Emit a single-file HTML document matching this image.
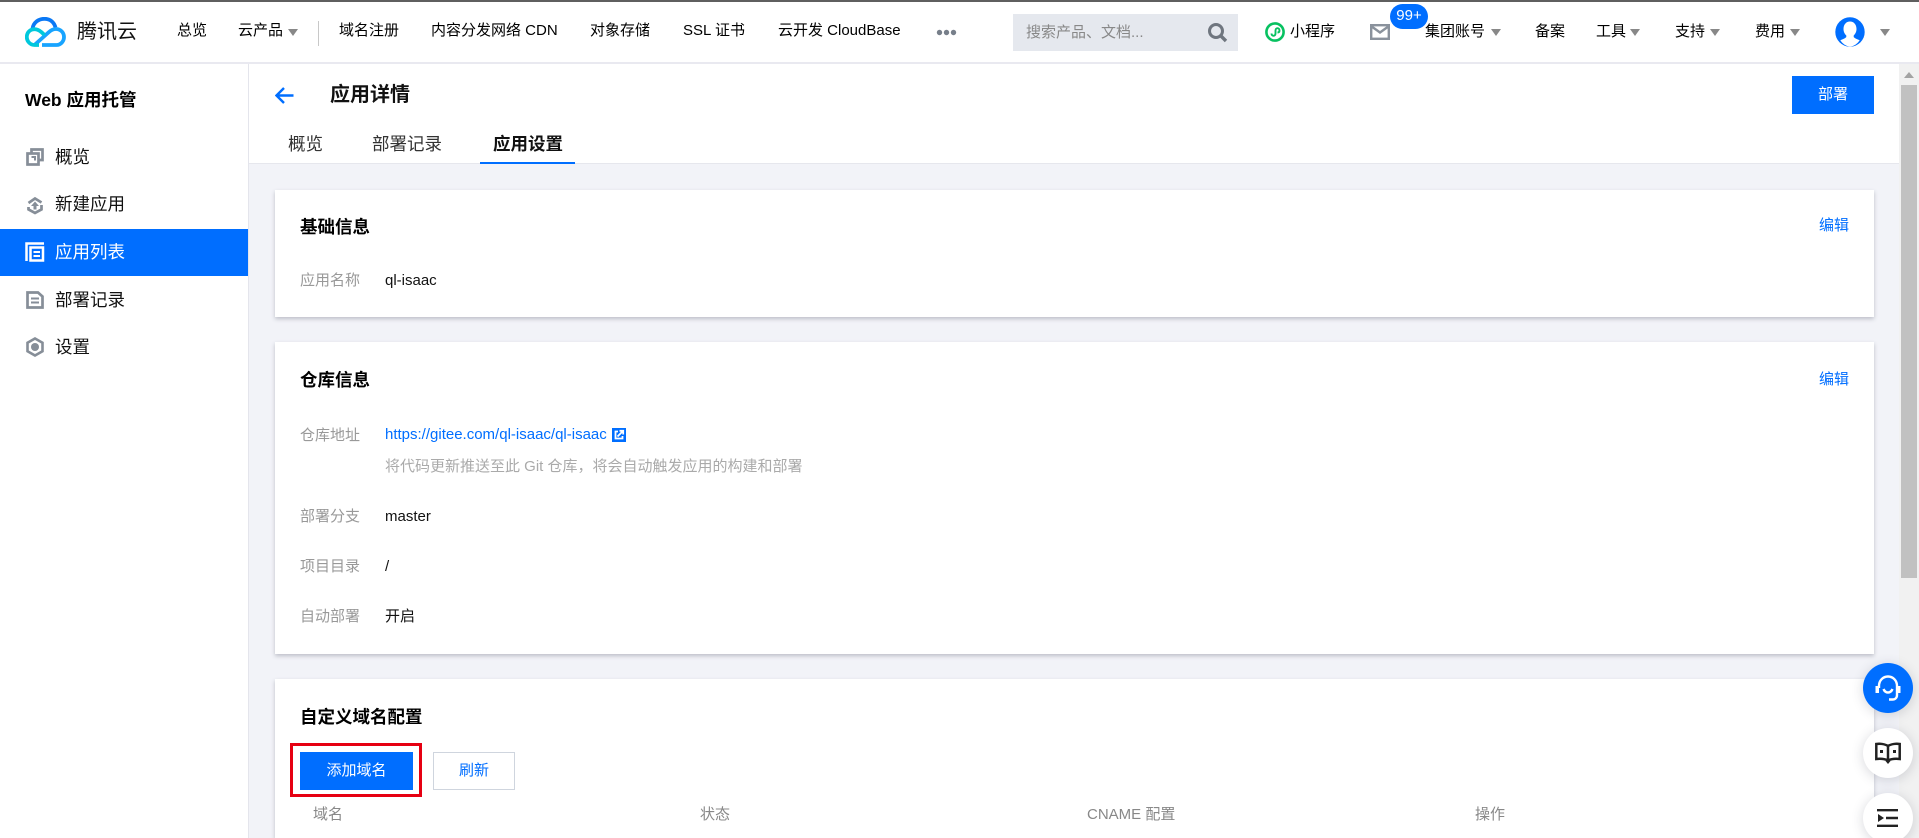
<!DOCTYPE html>
<html lang="zh"><head><meta charset="utf-8"><title>应用详情</title>
<style>
html,body{margin:0;padding:0;width:1919px;height:838px;overflow:hidden;background:#f2f3f8}
body{position:relative;font-family:"Liberation Sans","Noto Sans CJK SC",sans-serif;font-size:15px;color:#000}
.a{position:absolute;white-space:nowrap;line-height:20px}
.box{position:absolute}
.c{position:absolute;width:0;height:0;border-left:5px solid transparent;border-right:5px solid transparent;border-top:7px solid #888;top:29px}
.side{font-size:17.5px;left:55px;color:#111}
.lbl{left:300px;color:#999}
.val{left:385px;color:#111}
.card{position:absolute;left:275px;width:1599px;background:#fff;box-shadow:0 2px 4px rgba(54,58,80,.28)}
.title{left:300px;font-size:17.5px;font-weight:bold;color:#000}
.blue{color:#006eff}
.th{color:#888;top:805px}
.fab{position:absolute;left:1863px;width:50px;height:50px;border-radius:25px;background:#fff;box-shadow:0 2px 12px rgba(54,58,80,.2)}
svg{position:absolute;display:block}
</style></head><body>
<!-- top strip + header -->
<div class="box" style="left:0;top:0;width:1919px;height:62px;background:#fff"></div>
<div class="box" style="left:0;top:0;width:1919px;height:2px;background:#5f5f5f"></div>
<div class="box" style="left:0;top:62px;width:1919px;height:2px;background:#e9e9f0"></div>
<svg style="left:25px;top:17px" width="41" height="30" viewBox="0 0 41 30" fill="none">
<path d="M7.500 11.500C8.500 5.500 13.500 1.800 19.500 1.800C25 1.800 29 5 30.500 10.500" stroke="#0a78f5" stroke-width="3.800"/>
<path d="M17 28H31.500C36 28 39 24 39 20C39 15.500 35.500 12 31 12C28 12 26 13.200 24 15L10 27.500" stroke="#18a4ff" stroke-width="3.800" stroke-linejoin="round"/>
<path d="M14 28H9.500C5 28 1.800 24 1.800 20C1.800 15.500 5 12.200 9.500 12.200C12.500 12.200 14.500 13.500 16.500 15.200L19.500 18" stroke="#00c8dc" stroke-width="3.800"/>
</svg>
<div class="a" style="left:77px;top:22px;font-size:20px;color:#111">腾讯云</div>
<div class="a" style="left:177px;top:21px">总览</div>
<div class="a" style="left:238px;top:21px">云产品</div><div class="c" style="left:288px"></div>
<div class="box" style="left:318px;top:21px;width:1px;height:25px;background:#c8c8c8"></div>
<div class="a" style="left:339px;top:21px">域名注册</div>
<div class="a" style="left:431px;top:21px">内容分发网络 CDN</div>
<div class="a" style="left:590px;top:21px">对象存储</div>
<div class="a" style="left:683px;top:21px">SSL 证书</div>
<div class="a" style="left:778px;top:21px">云开发 CloudBase</div>
<svg style="left:936px;top:29px" width="21" height="7"><circle cx="3.500" cy="3.500" r="2.700" fill="#777f8a"/><circle cx="10.500" cy="3.500" r="2.700" fill="#777f8a"/><circle cx="17.500" cy="3.500" r="2.700" fill="#777f8a"/></svg>
<div class="box" style="left:1013px;top:14px;width:225px;height:37px;background:#e5e8ee"></div>
<div class="a" style="left:1026px;top:23px;color:#888">搜索产品、文档...</div>
<svg style="left:1207px;top:22px" width="21" height="21" viewBox="0 0 21 21" fill="none"><circle cx="9" cy="9" r="6.500" stroke="#6f767f" stroke-width="3"/><path d="M14 14l5 5" stroke="#6f767f" stroke-width="3.400"/></svg>
<svg style="left:1265px;top:22px" width="20" height="20" viewBox="0 0 20 20" fill="none"><circle cx="10" cy="10" r="8.600" stroke="#07c160" stroke-width="2.600"/><path d="M6.500 11.500c0 1.500 1 2.300 2 2.300s2-.8 2-2.300V8.500c0-1.500 1-2.300 2-2.300s2 .8 2 2.300-1 2-2 2" stroke="#07c160" stroke-width="1.900"/></svg>
<div class="a" style="left:1290px;top:22px">小程序</div>
<svg style="left:1370px;top:24px" width="20" height="16" viewBox="0 0 20 16" fill="none"><rect x="1.200" y="1.200" width="17.600" height="13.600" stroke="#8a929c" stroke-width="2.400"/><path d="M1 2l9 6.500L19 2" stroke="#8a929c" stroke-width="2.400"/></svg>
<div class="box" style="left:1390px;top:4px;width:38px;height:25px;border-radius:12.500px;background:#006eff"></div>
<div class="a" style="left:1390px;top:6px;width:38px;text-align:center;color:#fff;font-size:15px">99+</div>
<div class="a" style="left:1425px;top:22px">集团账号</div><div class="c" style="left:1491px"></div>
<div class="a" style="left:1535px;top:22px">备案</div>
<div class="a" style="left:1596px;top:22px">工具</div><div class="c" style="left:1630px"></div>
<div class="a" style="left:1675px;top:22px">支持</div><div class="c" style="left:1710px"></div>
<div class="a" style="left:1755px;top:22px">费用</div><div class="c" style="left:1790px"></div>
<svg style="left:1835px;top:17px" width="30" height="30" viewBox="0 0 30 30"><circle cx="15" cy="15" r="14.700" fill="#006eff"/><path d="M15 4.500c3.800 0 6.500 3 6.500 7.500 0 2.800-1.200 5-2.800 6.500v1.500c1 1.300 3.500 2.200 6 3.200A14 14 0 0 1 15 29.700a14 14 0 0 1-9.700-6.500c2.500-1 5-1.900 6-3.200v-1.500c-1.600-1.500-2.800-3.700-2.800-6.500 0-4.500 2.700-7.500 6.500-7.500z" fill="#fff"/></svg>
<div class="c" style="left:1880px"></div>

<!-- sidebar -->
<div class="box" style="left:0;top:64px;width:248px;height:774px;background:#fff;border-right:1px solid #e4e5ec"></div>
<div class="a" style="left:25px;top:90px;font-size:17.500px;font-weight:bold;color:#000">Web 应用托管</div>
<div class="box" style="left:0;top:229px;width:248px;height:47px;background:#006eff"></div>
<svg style="left:26px;top:148px" width="18" height="18" viewBox="0 0 18 18" fill="none" stroke="#868e98" stroke-width="2.700"><path d="M5.500 5V1.500h11V12H13"/><rect x="1.500" y="5.500" width="11" height="11"/><path d="M5.500 9h3.500v3.500" stroke-width="2"/></svg>
<div class="a side" style="top:147px">概览</div>
<svg style="left:26px;top:196px" width="18" height="19" viewBox="0 0 18 19" fill="none"><path d="M2.500 7L9 2.500 15.500 6.500M15.500 9v4.500L9 17l-6.500-3.500V11" stroke="#868e98" stroke-width="2.700"/><path d="M9 5.500l4 4.500h-2.500v3.500h-3V10H5z" fill="#868e98"/></svg>
<div class="a side" style="top:194px">新建应用</div>
<svg style="left:25px;top:242px" width="20" height="20" viewBox="0 0 20 20" fill="none" stroke="#fff" stroke-width="2.500"><path d="M19 1.500H1.500V19"/><rect x="5.500" y="5.500" width="12.500" height="13"/><path d="M8.500 10h6.500M8.500 14h6.500" stroke-width="2"/></svg>
<div class="a side" style="top:242px;color:#fff">应用列表</div>
<svg style="left:26px;top:291px" width="18" height="18" viewBox="0 0 18 18" fill="none" stroke="#868e98" stroke-width="2.700"><path d="M1.500 1.500h10.500l4.500 4v11h-15z"/><path d="M5 7.500h8M5 11.500h8" stroke-width="2"/></svg>
<div class="a side" style="top:290px">部署记录</div>
<svg style="left:26px;top:337px" width="18" height="20" viewBox="0 0 18 20"><path d="M9 1.500l7.500 4.300v8.400L9 18.500l-7.500-4.300V5.800z" fill="none" stroke="#868e98" stroke-width="2.600"/><circle cx="9" cy="10" r="4" fill="#868e98"/></svg>
<div class="a side" style="top:337px">设置</div>

<!-- content header -->
<div class="box" style="left:249px;top:64px;width:1650px;height:99px;background:#fff;border-bottom:1px solid #e6e7ed"></div>
<svg style="left:275px;top:86px" width="19" height="19" viewBox="0 0 19 19" fill="none" stroke="#006eff" stroke-width="2.400"><path d="M1.500 9.500h17M9 2L1.500 9.500 9 17"/></svg>
<div class="a" style="left:330px;top:85px;font-size:20px;font-weight:bold;color:#111">应用详情</div>
<div class="box" style="left:1792px;top:76px;width:82px;height:38px;background:#006eff"></div>
<div class="a" style="left:1792px;top:85px;width:82px;text-align:center;color:#fff">部署</div>
<div class="a" style="left:288px;top:134px;font-size:17.500px;color:#333">概览</div>
<div class="a" style="left:372px;top:134px;font-size:17.500px;color:#333">部署记录</div>
<div class="a" style="left:493px;top:134px;font-size:17.500px;font-weight:bold;color:#111">应用设置</div>
<div class="box" style="left:480px;top:162px;width:95px;height:2px;background:#006eff"></div>

<!-- card 1 -->
<div class="card" style="top:190px;height:127px"></div>
<div class="a title" style="top:217px">基础信息</div>
<div class="a blue" style="left:1819px;top:216px">编辑</div>
<div class="a lbl" style="top:271px">应用名称</div>
<div class="a val" style="top:271px">ql-isaac</div>

<!-- card 2 -->
<div class="card" style="top:342px;height:312px"></div>
<div class="a title" style="top:370px">仓库信息</div>
<div class="a blue" style="left:1819px;top:370px">编辑</div>
<div class="a lbl" style="top:426px">仓库地址</div>
<div class="a val blue" style="top:425px;color:#006eff">https://gitee.com/ql-isaac/ql-isaac</div>
<svg style="left:612px;top:428px" width="14" height="14" viewBox="0 0 14 14"><rect width="14" height="14" fill="#006eff"/><path d="M6 3.500H3.500v7h7V8" stroke="#fff" stroke-width="1.800" fill="none"/><path d="M5.500 8.500l5-5M7.500 2.800h3.700v3.700" stroke="#fff" stroke-width="1.800" fill="none"/></svg>
<div class="a" style="left:385px;top:457px;color:#aaa">将代码更新推送至此 Git 仓库，将会自动触发应用的构建和部署</div>
<div class="a lbl" style="top:507px">部署分支</div>
<div class="a val" style="top:507px">master</div>
<div class="a lbl" style="top:557px">项目目录</div>
<div class="a val" style="top:557px">/</div>
<div class="a lbl" style="top:607px">自动部署</div>
<div class="a val" style="top:607px">开启</div>

<!-- card 3 -->
<div class="card" style="top:679px;height:159px"></div>
<div class="a title" style="left:300px;top:707px">自定义域名配置</div>
<div class="box" style="left:290px;top:743px;width:126px;height:48px;border:3px solid #e60012"></div>
<div class="box" style="left:300px;top:752px;width:113px;height:38px;background:#006eff"></div>
<div class="a" style="left:300px;top:761px;width:113px;text-align:center;color:#fff">添加域名</div>
<div class="box" style="left:433px;top:752px;width:80px;height:36px;border:1px solid #cfd5de;background:#fff"></div>
<div class="a blue" style="left:433px;top:761px;width:82px;text-align:center">刷新</div>
<div class="a th" style="left:313px">域名</div>
<div class="a th" style="left:700px">状态</div>
<div class="a th" style="left:1087px">CNAME 配置</div>
<div class="a th" style="left:1475px">操作</div>

<!-- scrollbar -->
<div class="box" style="left:1899px;top:64px;width:20px;height:774px;background:#f1f1f1"></div>
<div class="box" style="left:1901px;top:85px;width:16px;height:493px;background:#c1c1c1"></div>
<div class="box" style="left:1904px;top:72px;width:0;height:0;border-left:5px solid transparent;border-right:5px solid transparent;border-bottom:6px solid #a3a3a3"></div>

<!-- floating buttons -->
<div class="fab" style="top:663px;background:#006eff"></div>
<svg style="left:1875px;top:675px" width="26" height="27" viewBox="0 0 26 27" fill="none" stroke="#fff" stroke-width="2.400"><path d="M4 13V11C4 5.500 8 1.500 13 1.500S22 5.500 22 11v9c0 3-2 4.500-4.500 4.500H14"/><path d="M8.500 14c1 2.500 3 3.500 4.500 3.500s3.500-1 4.500-3.500"/><rect x="0.500" y="11" width="3.500" height="7" fill="#fff" stroke="none"/><rect x="22" y="11" width="3.500" height="7" fill="#fff" stroke="none"/></svg>
<div class="fab" style="top:728px"></div>
<svg style="left:1875px;top:742px" width="26" height="22" viewBox="0 0 26 22" fill="none" stroke="#222" stroke-width="2.500"><path d="M13 4C10 2 5 1.500 1.300 2v15c4-.5 8.700 0 11.700 1.500 3-1.500 7.700-2 11.700-1.500V2c-3.700-.5-8.700 0-11.700 2zM13 4v14.500"/><path d="M5 9.500h3M18 9.500h3" stroke-width="3"/><path d="M10.500 19l2.500 3 2.500-3z" fill="#222" stroke="none"/></svg>
<div class="fab" style="top:793px"></div>
<svg style="left:1877px;top:809px" width="21" height="18" viewBox="0 0 21 18"><path d="M0 1.200h21M9 9h12M0 16.800h21" stroke="#222" stroke-width="2.400" fill="none"/><path d="M1 5l6 4-6 4z" fill="#222"/></svg>
</body></html>
